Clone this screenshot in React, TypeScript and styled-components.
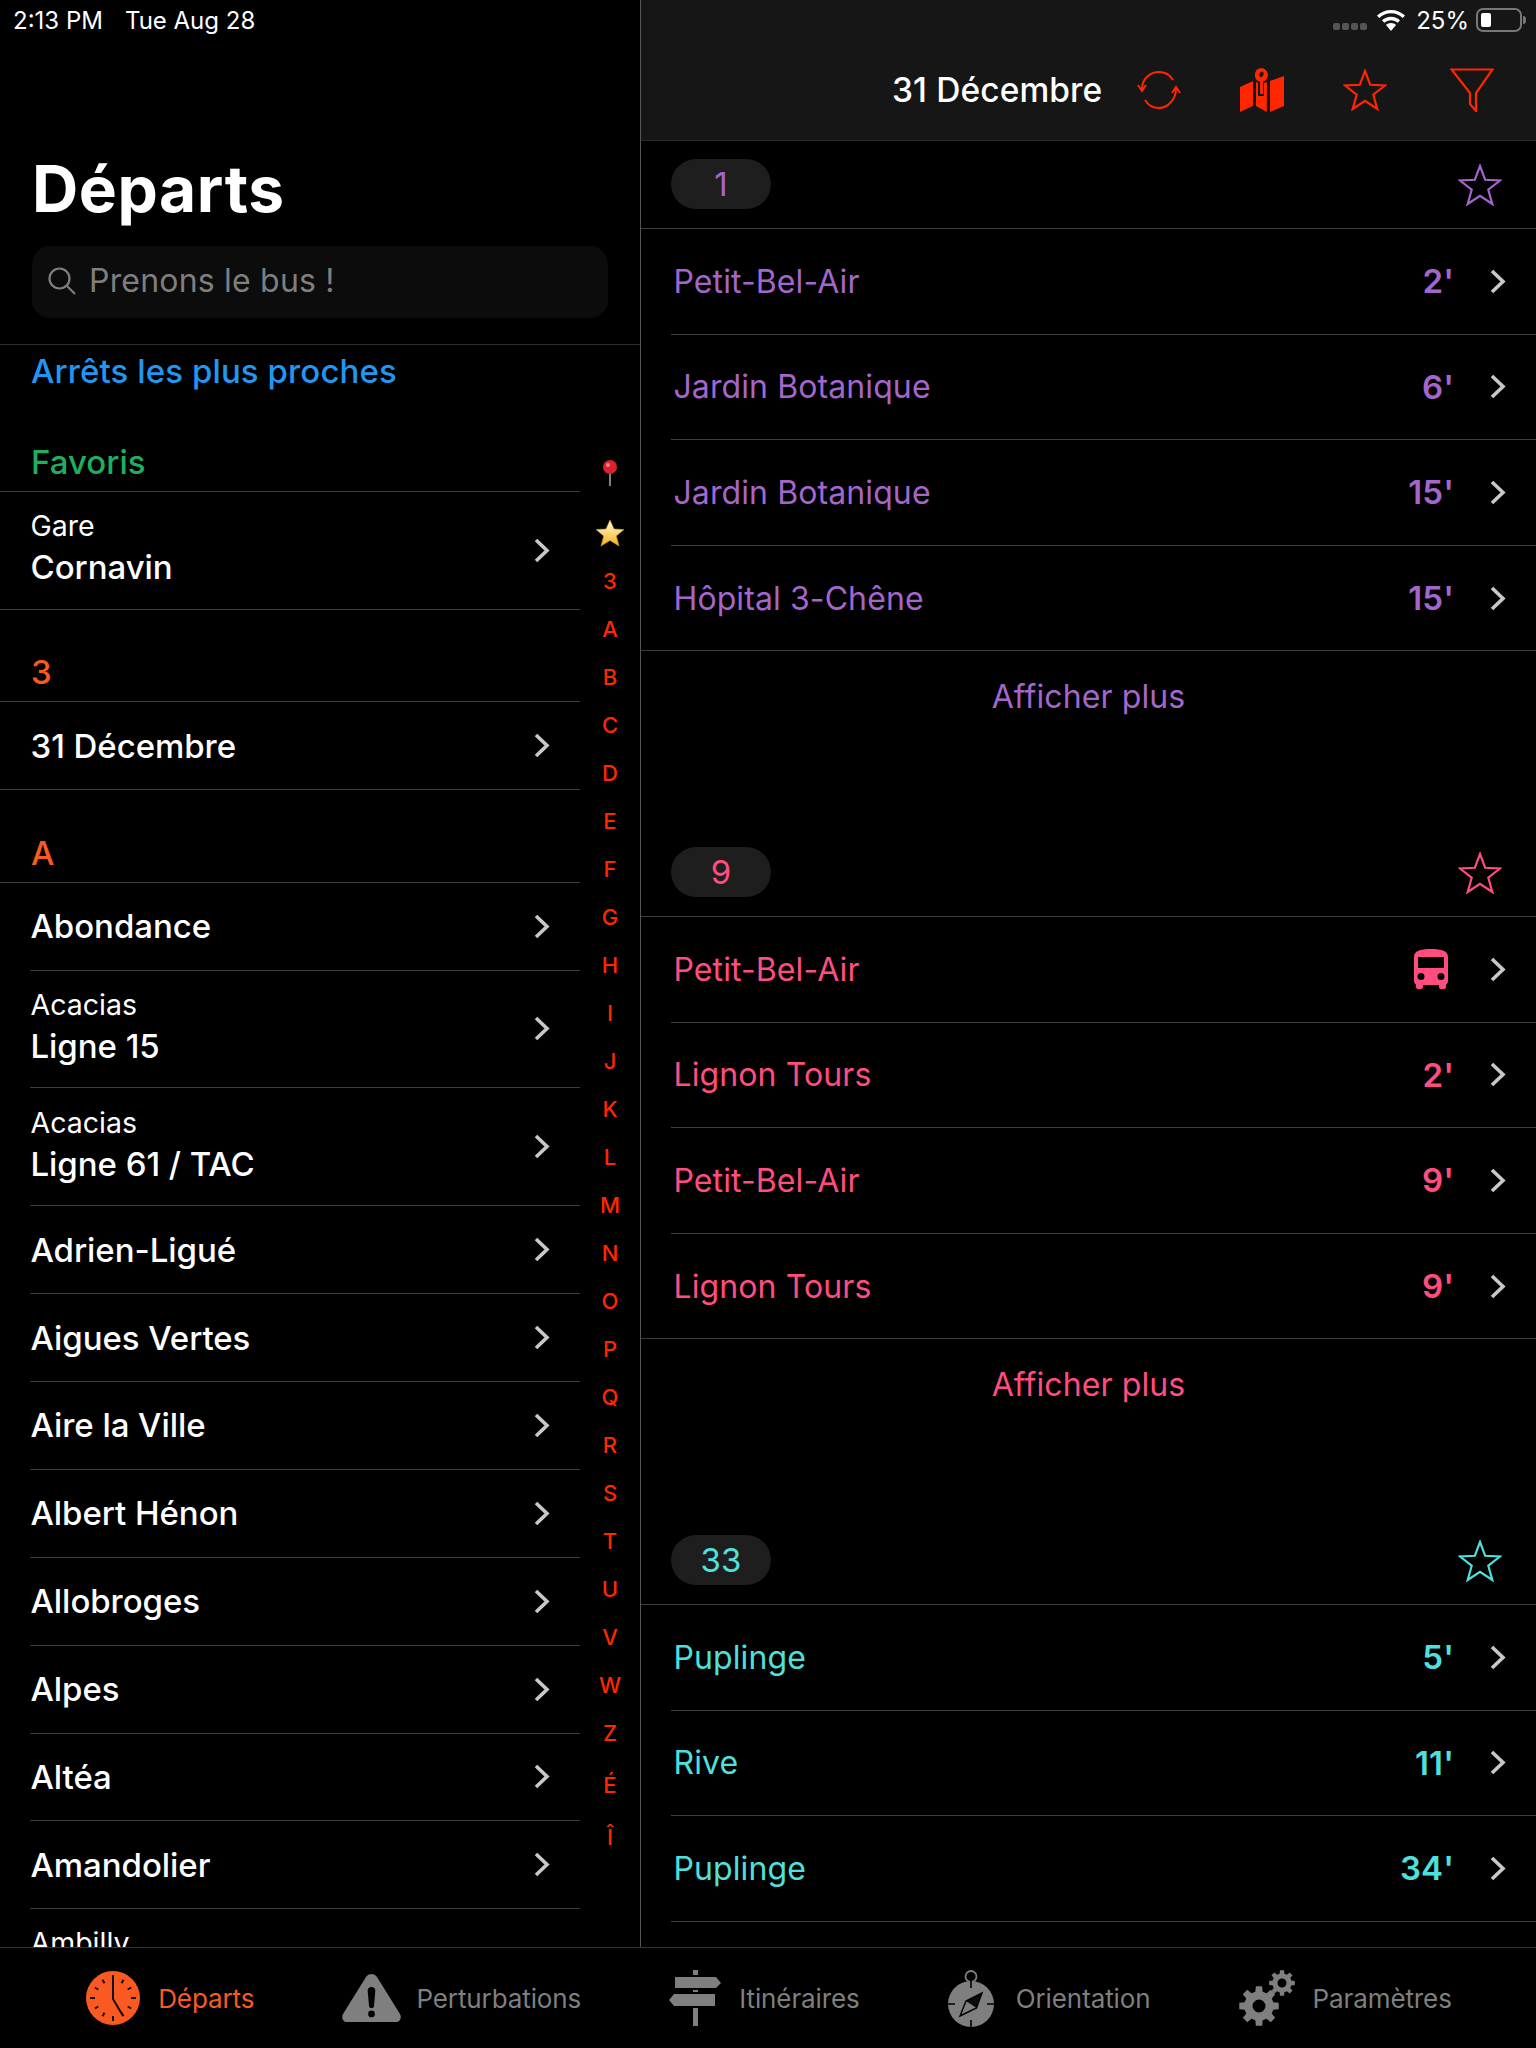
import React from 'react';
import styled, { createGlobalStyle } from 'styled-components';

const Global = createGlobalStyle`
  html, body { margin: 0; padding: 0; background: #000; }
  * { box-sizing: border-box; }
`;

const Page = styled.div`
  width: 1536px; height: 2048px; background: #000; color: #fff;
  font-family: Inter, "Noto Sans", sans-serif;
  display: flex; flex-direction: column; overflow: hidden;
`;
const Main = styled.main`flex: 1; min-height: 0; display: flex; overflow: hidden;`;
const Left = styled.section`
  width: 641px; flex: none; border-right: 1px solid #555;
  display: flex; flex-direction: column; overflow: hidden;
`;
const LeftTop = styled.header`
  height: 345px; flex: none; border-bottom: 1px solid #2e2e2e;
  display: flex; flex-direction: column;
`;
const Clock = styled.div`
  height: 40px; padding-left: 13px; display: flex; align-items: center; gap: 22px;
  font-size: 24px;
`;
const Title = styled.h1`
  margin: 116px 0 0 32px; font-size: 64px; line-height: 66px; font-weight: 700; letter-spacing: 0.6px;
`;
const Search = styled.div`
  margin: 24px 32px 0; height: 72px; border-radius: 18px; background: #0c0c0c;
  display: flex; align-items: center; gap: 12px; padding: 0 0 3px 15px;
  color: #7f7f7f; font-size: 32px; letter-spacing: 0.2px;
`;
const LeftBody = styled.div`flex: 1; min-height: 0; display: flex; overflow: hidden;`;
const List = styled.div`width: 580px; flex: none;`;
const Nearest = styled.div`
  height: 55px; padding: 0 0 2px 31px; display: flex; align-items: center;
  color: #2196f3; font-size: 33px; font-weight: 500; letter-spacing: 0.1px; margin-top: -1px;
`;
const SectionHead = styled.div<{ $color: string; $h: number }>`
  height: ${p => p.$h}px; padding: 0 0 8px 31px; display: flex; align-items: flex-end;
  color: ${p => p.$color}; font-size: 33px; line-height: 42px; font-weight: 500; border-bottom: 1px solid #3d3d3d;
`;
const StopRow = styled.div<{ $double?: boolean; $last?: boolean }>`
  height: ${p => (p.$double ? 117.8 : 87.9)}px; flex: none;
  margin-left: ${p => (p.$last ? 0 : 30)}px; padding: 0 30px ${p => (p.$double ? 6 : 0)}px ${p => (p.$last ? 30.5 : 0.5)}px;
  border-bottom: 1px solid #3d3d3d;
  display: flex; align-items: center; justify-content: space-between;
`;
const StopText = styled.div`display: flex; flex-direction: column;`;
const StopSub = styled.span`font-size: 28.5px; line-height: 40px;`;
const StopName = styled.span`font-size: 33px; line-height: 42px; font-weight: 500; letter-spacing: -0.05px;`;
const ChevronSlot = styled.span<{ $up?: boolean }>`display: flex; margin-top: ${p => (p.$up ? 6 : 0)}px;`;
const ClippedRow = styled.div`margin-left: 30.5px; padding-top: 14px;`;
const Index = styled.nav`
  flex: 1; padding-top: 92px; display: flex; flex-direction: column; align-items: center;
  color: #ff2600; font-size: 22px; font-weight: 500;
`;
const IndexItem = styled.div<{ $h?: number }>`
  height: ${p => p.$h ?? 48}px; width: 100%; flex: none;
  display: flex; align-items: center; justify-content: center;
`;
const Right = styled.section`flex: 1; min-width: 0; display: flex; flex-direction: column; overflow: hidden;`;
const RightHead = styled.header`
  height: 141px; flex: none; background: #161616; border-bottom: 1px solid #2a2a2a;
  display: flex; flex-direction: column;
`;
const StatusRight = styled.div`
  height: 40px; display: flex; align-items: center; justify-content: flex-end;
  font-size: 24px; padding-right: 14px;
`;
const SignalDots = styled.div`display: flex; gap: 2px; margin: 13px 10px 0 0;`;
const SignalDot = styled.i`width: 7px; height: 7px; border-radius: 2px; background: #555; display: block;`;
const Percent = styled.span`margin: 0 7px 0 11px;`;
const Battery = styled.div`
  width: 46px; height: 24px; border: 2px solid #777; border-radius: 7px; padding: 3px; position: relative;
  &::after { content: ''; position: absolute; right: -6px; top: 6px; width: 3px; height: 8px; background: #777; border-radius: 0 3px 3px 0; }
`;
const BatteryFill = styled.i`display: block; width: 10px; height: 100%; background: #fff; border-radius: 2px;`;
const Toolbar = styled.div`
  flex: 1; display: flex; align-items: center; padding: 0 42px 1px 251px;
`;
const ToolTitle = styled.h2`
  margin: 0; font-size: 33.5px; font-weight: 500; letter-spacing: 0.1px; width: 245px; flex: none; white-space: nowrap;
`;
const ToolIcons = styled.div`
  flex: 1; display: flex; align-items: center; gap: 59px;
  & > svg:last-child { margin-left: auto; }
`;
const Group = styled.div`height: 688px; flex: none; display: flex; flex-direction: column;`;
const GroupHead = styled.div`
  height: 88px; flex: none; display: flex; align-items: center; justify-content: space-between;
  padding: 0 34px 0 30px; border-bottom: 1px solid #3d3d3d;
`;
const LinePill = styled.div<{ $color: string }>`
  width: 100px; height: 50px; border-radius: 25px; background: #1e1e1e; color: ${p => p.$color};
  display: flex; align-items: center; justify-content: center; font-size: 33px; margin-top: -2px;
`;
const DepRow = styled.div<{ $color: string; $last?: boolean }>`
  height: 105.6px; flex: none; display: flex; align-items: center; justify-content: space-between;
  margin-left: ${p => (p.$last ? 0 : 30)}px; padding: 0 30px 0 ${p => (p.$last ? 32.5 : 2.5)}px;
  border-bottom: 1px solid #3d3d3d; color: ${p => p.$color}; font-size: 32px; letter-spacing: 0.1px;
`;
const DepEnd = styled.div`display: flex; align-items: center; gap: 36px;`;
const DepTime = styled.span`font-weight: 600; font-size: 33px;`;
const BusSlot = styled.span`display: flex; margin-right: 6px;`;
const More = styled.div<{ $color: string }>`
  height: 91px; flex: none; display: flex; align-items: center; justify-content: center;
  color: ${p => p.$color}; font-size: 32px; letter-spacing: 0.1px;
`;
const TabBar = styled.footer`
  height: 101px; flex: none; border-top: 1px solid #333; background: #000;
  display: flex; align-items: center; justify-content: center; gap: 88px; padding-left: 2px;
`;
const Tab = styled.div<{ $active?: boolean; $gap?: number }>`
  display: flex; align-items: center; gap: ${p => p.$gap ?? 18}px; font-size: 26px; letter-spacing: -0.1px;
  color: ${p => (p.$active ? '#fa5a22' : '#7f7f7f')};
`;

const Chevron = () => (
  <svg width="16" height="25" viewBox="0 0 16 25" fill="none"><path d="M2 2l11 10.5L2 23" stroke="#c8c8c8" strokeWidth="3.6" /></svg>
);
const starPts = '22,2 27.2,15.8 42,16.5 30.3,25.7 34.3,40 22,31.8 9.7,40 13.7,25.7 2,16.5 16.8,15.8';
const StarIcon = ({ color }: { color: string }) => (
  <svg width="44" height="42" viewBox="0 0 44 42" fill="none"><polygon points={starPts} stroke={color} strokeWidth="2.2" strokeLinejoin="miter" /></svg>
);
const SearchIcon = () => (
  <svg width="30" height="30" viewBox="0 0 30 30" fill="none" stroke="#7f7f7f" strokeWidth="2.2"><circle cx="12.5" cy="12.5" r="10" /><path d="M20 20l8 8" /></svg>
);
const Refresh = () => (
  <svg width="44" height="38" viewBox="0 0 44 38" fill="none" stroke="#ff2600" strokeWidth="2">
    <path d="M5 18C5 8 13 1 22 1c6 0 11 3 14 8" />
    <path d="M39 18c0 10-8 19-17 19-6 0-11-3-14-8" />
    <path d="M1 14l4 6 4-6M35 22l4-6 4 6" />
  </svg>
);
const MapPin = () => (
  <svg width="44" height="44" viewBox="0 0 44 44" fill="#ff2600">
    <path fillRule="evenodd" d="M21 0a7 7 0 0 1 2 13.7V26h-3V13.7A7 7 0 0 1 21 0zm1 3.5a2 3 20 1 0 .1 0z" />
    <path d="M0 19l13-6v25L0 44zM16 14l2 1v13h6V15l3-1-.2 30L16 38zM30 13l14-5v30l-14 6z" />
  </svg>
);
const Filter = () => (
  <svg width="44" height="44" viewBox="0 0 44 44" fill="none" stroke="#ff2600" strokeWidth="2.2">
    <path d="M1.5 1.5h41L26 25v18l-6-7V25z" />
  </svg>
);
const Wifi = () => (
  <svg width="28" height="21" viewBox="0 0 28 21" fill="#fff">
    <path d="M14 0C8.700 0 4 2 0 5.500L2.200 8C5.500 5 9.500 3.300 14 3.300S22.500 5 25.800 8L28 5.500C24 2 19.300 0 14 0z" />
    <path d="M14 6.800c-3.400 0-6.500 1.200-9 3.400l2.300 2.500c1.900-1.600 4.200-2.500 6.700-2.500s4.800.9 6.700 2.500l2.300-2.500c-2.500-2.200-5.600-3.400-9-3.400z" />
    <path d="M14 13c-2 0-3.700.7-5 1.900L14 21l5-6.100C17.700 13.700 16 13 14 13z" />
  </svg>
);
const PinEmoji = () => (
  <svg width="16" height="26" viewBox="0 0 16 26">
    <rect x="7" y="11" width="2" height="15" fill="#8a8378" />
    <circle cx="8" cy="7" r="7" fill="#d8232f" />
    <circle cx="6" cy="5" r="2" fill="#f2808a" />
  </svg>
);
const StarEmoji = () => (
  <svg width="30" height="28" viewBox="0 0 30 28">
    <defs>
      <linearGradient id="g" x1="0" y1="0" x2="0" y2="1">
        <stop offset="0" stopColor="#fffde0" />
        <stop offset="1" stopColor="#f3b213" />
      </linearGradient>
    </defs>
    <polygon points="15,1 19,10 29,10.500 21.300,17 24,27 15,21.500 6,27 8.700,17 1,10.500 11,10" fill="url(#g)" stroke="#c79a1f" strokeWidth="0.6" />
  </svg>
);
const BusIcon = ({ color }: { color: string }) => (
  <svg width="34" height="40" viewBox="0 0 34 40">
    <path fillRule="evenodd" fill={color} d="M0 8C0 2 6 0 17 0s17 2 17 8v24c0 2-1 3-2 3.500V38a2 2 0 0 1-2 2h-3a2 2 0 0 1-2-2v-2H9v2a2 2 0 0 1-2 2H4a2 2 0 0 1-2-2v-2.500C1 35 0 34 0 32zM4 8v11h26V8zM7 24a3.500 3.500 0 1 0 0 7 3.500 3.500 0 0 0 0-7zM27 24a3.500 3.500 0 1 0 0 7 3.500 3.500 0 0 0 0-7z" />
  </svg>
);
const ClockIcon = () => {
  const ticks = Array.from({ length: 12 }, (_, i) => i * 30);
  return (
    <svg width="54" height="54" viewBox="0 0 54 54">
      <circle cx="27" cy="27" r="27" fill="#fa5a22" />
      {ticks.map(a => (
        <rect key={a} x="26" y={a % 90 === 0 ? 4 : 6} width="2" height={a % 90 === 0 ? 5 : 4} fill="#111" transform={`rotate(${a} 27 27)`} />
      ))}
      <path d="M27 8v20l9.500 16" fill="none" stroke="#111" strokeWidth="2" />
    </svg>
  );
};
const WarnIcon = () => (
  <svg width="59" height="48" viewBox="0 0 59 48">
    <path fillRule="evenodd" fill="#7f7f7f" d="M24 3c2.500-4 8.500-4 11 0l23 37c2 3.500 0 8-4 8H5c-4 0-6-4.500-4-8zM29.500 13c-2.500 0-4 1.500-3.800 4l1.300 15c.2 1.500 1 2 2.500 2s2.300-.5 2.500-2l1.300-15c.2-2.500-1.300-4-3.800-4zm0 23.500a3.400 3.400 0 1 0 0 6.800 3.400 3.400 0 0 0 0-6.800z" />
  </svg>
);
const SignIcon = () => (
  <svg width="52" height="56" viewBox="0 0 52 56" fill="#7f7f7f">
    <path d="M24 0h5v5h-5zM6 7h41l5 6-5 5H6zM24 20h5v2h-5zM5 24h41v12H5l-5-6zM24 38h5v18h-5z" />
  </svg>
);
const CompassIcon = () => (
  <svg width="46" height="57" viewBox="0 0 46 57">
    <circle cx="23" cy="6.500" r="5.500" fill="none" stroke="#7f7f7f" strokeWidth="1.800" />
    <circle cx="23" cy="34" r="23" fill="#7f7f7f" />
    <path d="M23 11v7M23 50v7M0 34h7M39 34h7" stroke="#000" strokeWidth="1.600" />
    <path d="M34 23l-5.500 15L12 46l6-15z" fill="none" stroke="#000" strokeWidth="1.400" />
    <path d="M34 23L18 31l10.500 7z" fill="#000" opacity="0.9" />
  </svg>
);
const gearPath = (cx: number, cy: number, r: number, hole: number, teeth: number) => {
  const pts: string[] = [];
  const root = r * 0.74;
  for (let i = 0; i < teeth; i++) {
    const step = (Math.PI * 2) / teeth;
    const a = i * step;
    const at = (rad: number, ang: number) => `${(cx + rad * Math.sin(ang)).toFixed(2)} ${(cy - rad * Math.cos(ang)).toFixed(2)}`;
    pts.push(at(root, a - step * 0.32), at(r, a - step * 0.2), at(r, a + step * 0.2), at(root, a + step * 0.32));
  }
  return `M${pts.join('L')}ZM${cx - hole} ${cy}a${hole} ${hole} 0 1 0 ${hole * 2} 0a${hole} ${hole} 0 1 0 ${-hole * 2} 0Z`;
};
const GearsIcon = () => (
  <svg width="56" height="56" viewBox="0 0 56 56" fill="#7f7f7f">
    <path fillRule="evenodd" d={gearPath(20, 36, 20, 6.500, 8)} />
    <path fillRule="evenodd" d={gearPath(43, 13, 13, 4.500, 8)} />
  </svg>
);

type Stop = { name?: string; sub?: string };
const sections: { head: string; color: string; h: number; stops: Stop[] }[] = [
  { head: 'Favoris', color: '#1cb05f', h: 93, stops: [{ sub: 'Gare', name: 'Cornavin' }] },
  { head: '3', color: '#fa5a22', h: 92.5, stops: [{ name: '31 Décembre' }] },
  {
    head: 'A', color: '#fa5a22', h: 92.5,
    stops: [
      { name: 'Abondance' }, { sub: 'Acacias', name: 'Ligne 15' }, { sub: 'Acacias', name: 'Ligne 61 / TAC' },
      { name: 'Adrien-Ligué' }, { name: 'Aigues Vertes' }, { name: 'Aire la Ville' }, { name: 'Albert Hénon' },
      { name: 'Allobroges' }, { name: 'Alpes' }, { name: 'Altéa' }, { name: 'Amandolier' },
    ],
  },
];
const letters = '3ABCDEFGHIJKLMNOPQRSTUVWZ'.split('');
const groups: { line: string; color: string; more: boolean; deps: [string, string | null][] }[] = [
  { line: '1', color: '#a566cc', more: true, deps: [['Petit-Bel-Air', "2'"], ['Jardin Botanique', "6'"], ['Jardin Botanique', "15'"], ['Hôpital 3-Chêne', "15'"]] },
  { line: '9', color: '#ff4d80', more: true, deps: [['Petit-Bel-Air', null], ['Lignon Tours', "2'"], ['Petit-Bel-Air', "9'"], ['Lignon Tours', "9'"]] },
  { line: '33', color: '#4fe0dc', more: false, deps: [['Puplinge', "5'"], ['Rive', "11'"], ['Puplinge', "34'"]] },
];

export default function App() {
  return (
    <Page>
      <Global />
      <Main>
        <Left>
          <LeftTop>
            <Clock><span>2:13 PM</span><span>Tue Aug 28</span></Clock>
            <Title>Départs</Title>
            <Search><SearchIcon /><span>Prenons le bus !</span></Search>
          </LeftTop>
          <LeftBody>
            <List>
              <Nearest>Arrêts les plus proches</Nearest>
              {sections.map(s => (
                <div key={s.head}>
                  <SectionHead $color={s.color} $h={s.h}>{s.head}</SectionHead>
                  {s.stops.map((st, i) => (
                    <StopRow key={i} $double={!!st.sub} $last={i === s.stops.length - 1 && s.head !== 'A'}>
                      <StopText>
                        {st.sub && <StopSub>{st.sub}</StopSub>}
                        <StopName>{st.name}</StopName>
                      </StopText>
                      <ChevronSlot $up={!!st.sub}><Chevron /></ChevronSlot>
                    </StopRow>
                  ))}
                </div>
              ))}
              <ClippedRow><StopSub>Ambilly</StopSub></ClippedRow>
            </List>
            <Index>
              <IndexItem $h={72}><PinEmoji /></IndexItem>
              <IndexItem><StarEmoji /></IndexItem>
              {letters.map(l => <IndexItem key={l}>{l}</IndexItem>)}
              <IndexItem $h={56}>É</IndexItem>
              <IndexItem>Î</IndexItem>
            </Index>
          </LeftBody>
        </Left>
        <Right>
          <RightHead>
            <StatusRight>
              <SignalDots><SignalDot /><SignalDot /><SignalDot /><SignalDot /></SignalDots>
              <Wifi />
              <Percent>25%</Percent>
              <Battery><BatteryFill /></Battery>
            </StatusRight>
            <Toolbar>
              <ToolTitle>31 Décembre</ToolTitle>
              <ToolIcons>
                <Refresh /><MapPin /><StarIcon color="#ff2600" /><Filter />
              </ToolIcons>
            </Toolbar>
          </RightHead>
          {groups.map(g => (
            <Group key={g.line}>
              <GroupHead>
                <LinePill $color={g.color}>{g.line}</LinePill>
                <StarIcon color={g.color} />
              </GroupHead>
              {g.deps.map(([name, t], i) => (
                <DepRow key={i} $color={g.color} $last={g.more && i === g.deps.length - 1}>
                  <span>{name}</span>
                  <DepEnd>
                    {t ? <DepTime>{t}</DepTime> : <BusSlot><BusIcon color={g.color} /></BusSlot>}
                    <Chevron />
                  </DepEnd>
                </DepRow>
              ))}
              {g.more && <More $color={g.color}>Afficher plus</More>}
            </Group>
          ))}
        </Right>
      </Main>
      <TabBar>
        <Tab $active><ClockIcon />Départs</Tab>
        <Tab $gap={15}><WarnIcon />Perturbations</Tab>
        <Tab><SignIcon />Itinéraires</Tab>
        <Tab $gap={22}><CompassIcon />Orientation</Tab>
        <Tab><GearsIcon />Paramètres</Tab>
      </TabBar>
    </Page>
  );
}
